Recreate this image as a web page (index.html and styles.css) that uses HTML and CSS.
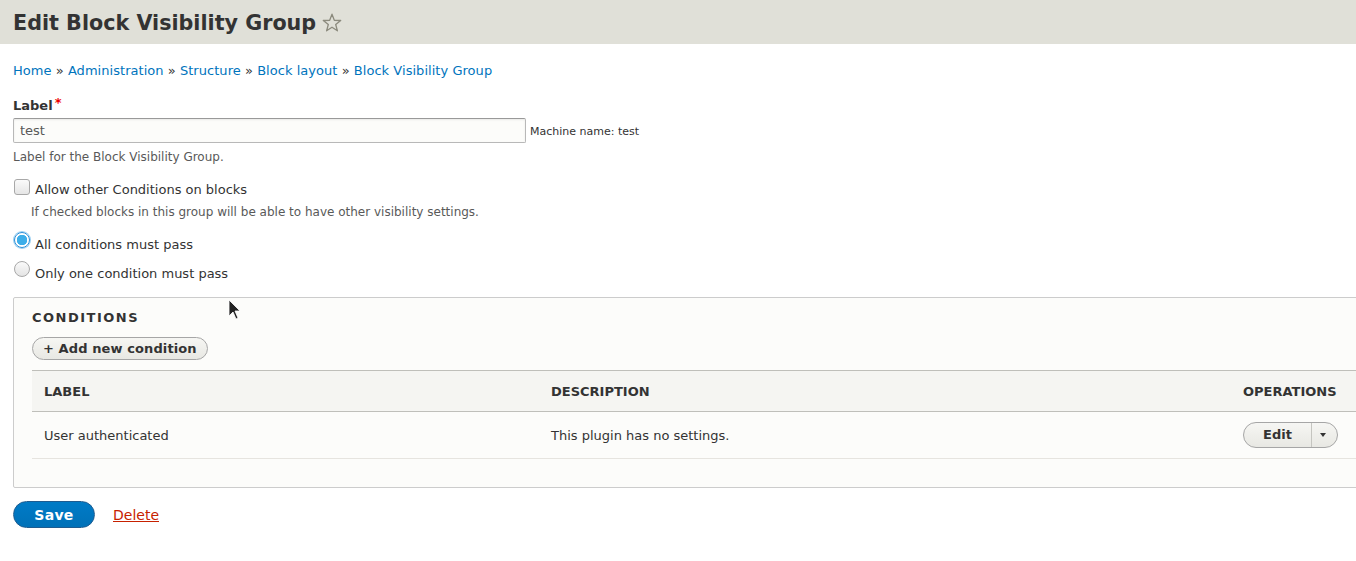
FILE: index.html
```html
<!DOCTYPE html>
<html lang="en">
<head>
<meta charset="utf-8">
<title>Edit Block Visibility Group</title>
<link rel="stylesheet" href="styles.css">
</head>
<body>
<header class="page-header">
  <h1 class="page-title">Edit Block Visibility Group</h1>
  <svg class="star" width="22" height="22" viewBox="0 0 22 22" aria-hidden="true">
    <path d="M11 2.2 L13.3 8.3 L19.7 8.5 L14.7 12.5 L16.4 18.8 L11 15.2 L5.6 18.8 L7.3 12.5 L2.3 8.5 L8.7 8.3 Z" fill="none" stroke="#8b8a7d" stroke-width="1.3" stroke-linejoin="round"/>
  </svg>
</header>
<main class="content">
  <nav class="breadcrumb">
    <a href="#">Home</a> » <a href="#">Administration</a> » <a href="#">Structure</a> » <a href="#">Block layout</a> » <a href="#">Block Visibility Group</a>
  </nav>

  <div class="form-item">
    <label class="form-label">Label<span class="req">*</span></label>
    <div class="input-row">
      <input class="text-input" type="text" value="test">
      <span class="machine">Machine name: test</span>
    </div>
    <div class="desc">Label for the Block Visibility Group.</div>
  </div>

  <div class="check-item">
    <div class="check-row"><span class="checkbox"></span><span class="opt-label">Allow other Conditions on blocks</span></div>
    <div class="desc indent">If checked blocks in this group will be able to have other visibility settings.</div>
  </div>

  <div class="radios">
    <div class="check-row"><span class="radio checked"></span><span class="opt-label">All conditions must pass</span></div>
    <div class="check-row"><span class="radio"></span><span class="opt-label">Only one condition must pass</span></div>
  </div>

  <section class="fieldset">
    <h2 class="legend">Conditions</h2>
    <button class="btn-small" type="button">+ Add new condition</button>
    <table class="table">
      <thead>
        <tr><th class="c1">Label</th><th class="c2">Description</th><th class="c3">Operations</th></tr>
      </thead>
      <tbody>
        <tr>
          <td>User authenticated</td>
          <td>This plugin has no settings.</td>
          <td>
            <div class="dropbutton"><span class="db-main">Edit</span><span class="db-toggle"><span class="caret"></span></span></div>
          </td>
        </tr>
      </tbody>
    </table>
  </section>

  <div class="actions">
    <button class="btn-primary" type="button">Save</button>
    <a class="delete" href="#">Delete</a>
  </div>
</main>
<div class="cursor" aria-hidden="true">
  <svg width="14" height="22" viewBox="0 0 14 22"><path d="M1 1 L1 17 L5 13 L8 20 L10 19 L7 12 L12 12 Z" fill="#222" stroke="#fff" stroke-width="0.8"/></svg>
</div>
</body>
</html>
```

FILE: styles.css
```css
html { overflow: hidden; }
body {
  margin: 0;
  font-family: "DejaVu Sans", "Noto Sans", sans-serif;
  color: #333;
  background: #fff;
  font-size: 13px;
  width: 1420px;
}
.page-header {
  background: #e0e0d8;
  height: 44px;
  display: flex;
  align-items: center;
  padding: 0 13px;
  box-sizing: border-box;
}
.page-title {
  margin: 0;
  font-size: 20.7px;
  font-weight: bold;
  color: #333;
  position: relative;
  top: 1px;
}
.star { margin-left: 5px; margin-top: 2px; }
.content { padding: 0 13px; }
.breadcrumb {
  margin-top: 19px;
  line-height: 16px;
  font-size: 13px;
  color: #333;
  letter-spacing: 0.04px;
}
.breadcrumb a { color: #0074bd; text-decoration: none; }

.form-item { margin-top: 19px; }
.form-label {
  display: block;
  font-weight: bold;
  font-size: 13px;
  line-height: 16px;
}
.req { color: #e00; margin-left: 2px; position: relative; top: -3px; }
.input-row { display: flex; align-items: center; margin-top: 4px; }
.text-input {
  width: 513px;
  height: 25px;
  box-sizing: border-box;
  border: 1px solid #b8b8b8;
  border-top-color: #999;
  border-radius: 2px;
  background: #fcfcfa;
  font-family: inherit;
  font-size: 13px;
  color: #595959;
  padding: 2px 6px;
  margin: 0;
  box-shadow: inset 0 1px 2px rgba(0,0,0,.08);
}
.machine { font-size: 11px; margin-left: 4px; color: #333; margin-top: 1px; }
.desc {
  font-size: 12px;
  color: #595959;
  line-height: 15px;
  margin-top: 7px;
}
.desc.indent { margin-left: 18px; margin-top: 7px; }

.check-item { margin-top: 13px; }
.check-row { display: flex; align-items: center; height: 20px; }
.opt-label { font-size: 13px; margin-left: 5px; margin-top: 4px; }
.check-item .opt-label { margin-top: 3px; }
.checkbox {
  width: 16px; height: 16px;
  box-sizing: border-box;
  border: 1px solid #a8a8a8;
  border-radius: 3px;
  background: linear-gradient(#fafafa, #e6e6e6);
  margin-left: 1px;
  margin-top: -2px;
}
.radios { margin-top: 12px; }
.radios .check-row + .check-row { margin-top: 9px; }
.radio {
  width: 16px; height: 16px;
  box-sizing: border-box;
  border: 1px solid #a8a8a8;
  border-radius: 50%;
  background: linear-gradient(#fafafa, #e4e4e4);
  margin-left: 1px;
  margin-top: -5px;
}
.radio.checked {
  border: 1px solid #2b8fd8;
  background: radial-gradient(circle, #3daee9 0, #3daee9 5px, #fff 5.5px);
  box-shadow: 0 0 0 1px #9cd0f2;
}

.fieldset {
  margin-top: 16px;
  border: 1px solid #ccc;
  background: #fcfcfa;
  padding: 12px 0 28px 18px;
  border-radius: 2px;
}
.legend {
  margin: 0;
  font-size: 13px;
  font-weight: bold;
  text-transform: uppercase;
  letter-spacing: 1.5px;
  line-height: 16px;
}
.btn-small {
  margin-top: 11px;
  font-family: inherit;
  font-size: 13px;
  font-weight: bold;
  color: #333;
  height: 23px;
  padding: 0 10px;
  border: 1px solid #a6a6a6;
  border-radius: 12px;
  background: linear-gradient(#f6f6f3, #e8e8e3);
  line-height: 21px;
  letter-spacing: 0.1px;
  display: block;
}
.table {
  margin-top: 10px;
  border-collapse: collapse;
  width: 1360px;
  font-size: 13px;
}
.table th {
  background: #f5f5f2;
  border-top: 1px solid #bfbfba;
  border-bottom: 1px solid #bfbfba;
  text-align: left;
  text-transform: uppercase;
  font-size: 13px;
  font-weight: bold;
  height: 40px;
  padding: 0 12px;
  color: #333;
}
.table th.c1 { width: 483px; }
.table th.c2 { width: 668px; }
.table td {
  height: 46px;
  padding: 0 12px;
  border-bottom: 1px solid #e6e4df;
  color: #333;
}
.dropbutton {
  display: inline-flex;
  height: 24px;
  border: 1px solid #a6a6a6;
  border-radius: 13px;
  background: linear-gradient(#f6f6f3, #e8e8e3);
  overflow: hidden;
  vertical-align: middle;
}
.db-main {
  width: 67px;
  text-align: center;
  font-weight: bold;
  line-height: 24px;
  font-size: 13px;
}
.db-toggle {
  width: 25px;
  border-left: 1px solid #c5c5c0;
  display: flex;
  align-items: center;
  justify-content: center;
}
.caret {
  width: 0; height: 0;
  border-left: 3.5px solid transparent;
  border-right: 3.5px solid transparent;
  border-top: 4px solid #333;
  margin-right: 3px;
}

.actions {
  display: flex;
  align-items: center;
  margin-top: 13px;
}
.btn-primary {
  width: 82px;
  height: 27px;
  border: 1px solid #1e5c90;
  border-radius: 14px;
  background: linear-gradient(#007bc6, #0071b8);
  color: #fff;
  font-family: inherit;
  font-weight: bold;
  font-size: 14px;
  letter-spacing: 0.3px;
}
.delete {
  margin-left: 18px;
  color: #c72100;
  font-size: 14px;
  text-decoration: underline;
}
.cursor {
  position: absolute;
  left: 228px;
  top: 299px;
}
```
